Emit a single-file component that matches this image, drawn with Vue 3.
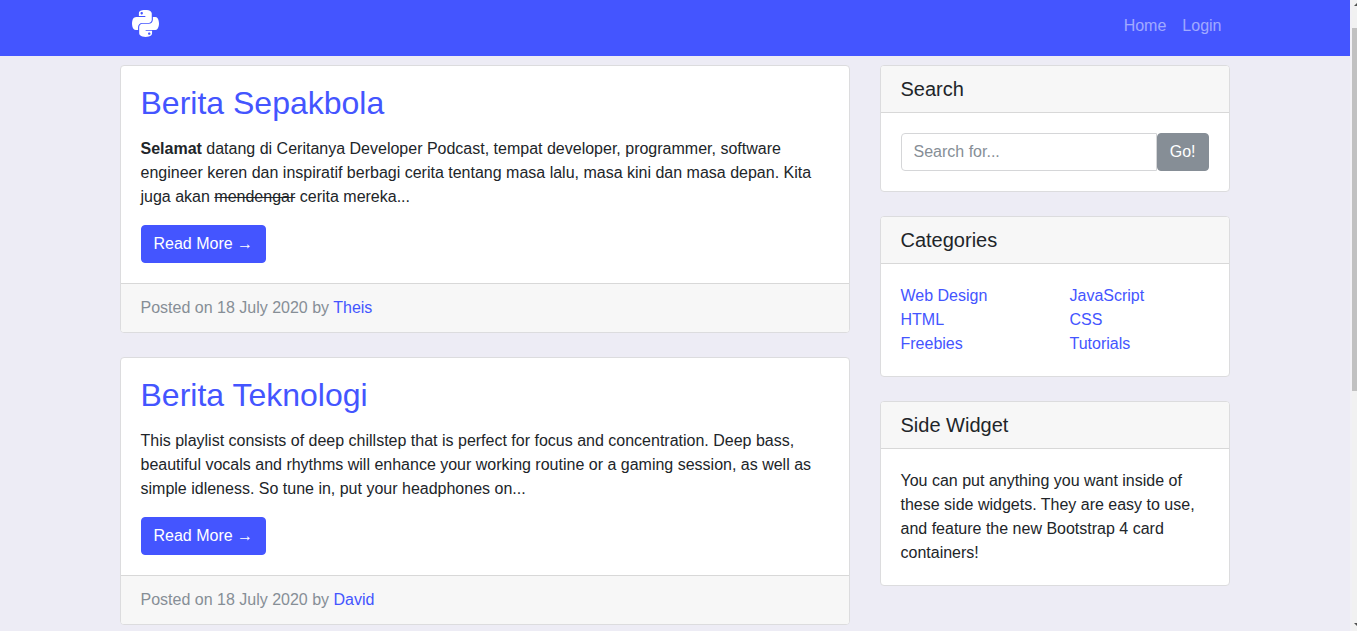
<script setup>
import { ref } from 'vue'

const query = ref('')

const posts = [
  {
    title: 'Berita Sepakbola',
    body: [
      { tag: 'strong', text: 'Selamat' },
      { text: ' datang di Ceritanya Developer Podcast, tempat developer, programmer, software engineer keren dan inspiratif berbagi cerita tentang masa lalu, masa kini dan masa depan. Kita juga akan ' },
      { tag: 's', text: 'mendengar' },
      { text: ' cerita mereka...' }
    ],
    date: '18 July 2020',
    author: 'Theis'
  },
  {
    title: 'Berita Teknologi',
    body: [
      { text: 'This playlist consists of deep chillstep that is perfect for focus and concentration. Deep bass, beautiful vocals and rhythms will enhance your working routine or a gaming session, as well as simple idleness. So tune in, put your headphones on...' }
    ],
    date: '18 July 2020',
    author: 'David'
  }
]

const categories = [
  ['Web Design', 'HTML', 'Freebies'],
  ['JavaScript', 'CSS', 'Tutorials']
]
</script>

<template>
  <div class="shell">
    <div class="page">
      <nav class="navbar">
        <div class="container navbar-inner">
          <a class="brand" href="#" aria-label="Home page">
            <svg class="logo" viewBox="0 0 448 512" aria-hidden="true">
              <path fill="currentColor" d="M439.8 200.5c-7.7-30.9-22.3-54.2-53.4-54.2h-40.1v47.4c0 36.8-31.2 67.8-66.8 67.8H172.7c-29.2 0-53.4 25-53.4 54.3v101.8c0 29 25.2 46 53.4 54.3 33.8 9.9 66.3 11.7 106.8 0 26.9-7.8 53.4-23.5 53.4-54.3v-40.7H226.2v-13.6h160.2c31.1 0 42.6-21.7 53.4-54.2 11.2-33.5 10.7-65.7 0-108.6zM286.2 404c11.1 0 20.1 9.1 20.1 20.3 0 11.3-9 20.4-20.1 20.4-11 0-20.1-9.2-20.1-20.4.1-11.3 9.1-20.3 20.1-20.3zM167.8 248.1h106.8c29.7 0 53.4-24.5 53.4-54.3V91.9c0-29-24.4-50.7-53.4-55.6-35.8-5.9-74.7-5.6-106.8.1-45.2 8-53.4 24.7-53.4 55.6v40.7h106.9v13.6h-147c-31.1 0-58.3 18.7-66.8 54.2-9.8 40.7-10.2 66.1 0 108.6 7.6 31.6 25.7 54.2 56.8 54.2H101v-48.8c0-35.3 30.5-66.4 66.8-66.4zm-6.7-142.6c-11.1 0-20.1-9.1-20.1-20.3.1-11.3 9-20.4 20.1-20.4 11 0 20.1 9.2 20.1 20.4s-9 20.3-20.1 20.3z" />
            </svg>
          </a>
          <div class="nav-links">
            <a href="#">Home</a>
            <a href="#">Login</a>
          </div>
        </div>
      </nav>

      <div class="container columns">
        <main class="stack">
          <article v-for="post in posts" :key="post.title" class="card">
            <div class="card-body">
              <h2><a href="#">{{ post.title }}</a></h2>
              <p class="excerpt"><template v-for="(part, i) in post.body" :key="i"><component :is="part.tag" v-if="part.tag">{{ part.text }}</component><template v-else>{{ part.text }}</template></template></p>
              <a class="btn btn-primary" href="#">Read More →</a>
            </div>
            <footer class="card-footer">Posted on {{ post.date }} by <a href="#">{{ post.author }}</a></footer>
          </article>
        </main>

        <aside class="stack">
          <section class="card">
            <h5>Search</h5>
            <form class="card-body search" @submit.prevent>
              <input v-model="query" type="text" placeholder="Search for..." aria-label="Search for">
              <button class="btn btn-secondary" type="submit">Go!</button>
            </form>
          </section>

          <section class="card">
            <h5>Categories</h5>
            <div class="card-body categories">
              <ul v-for="(group, i) in categories" :key="i">
                <li v-for="name in group" :key="name"><a href="#">{{ name }}</a></li>
              </ul>
            </div>
          </section>

          <section class="card">
            <h5>Side Widget</h5>
            <div class="card-body">You can put anything you want inside of these side widgets. They are easy to use, and feature the new Bootstrap 4 card containers!</div>
          </section>
        </aside>
      </div>
    </div>

    <div class="scrollbar" aria-hidden="true">
      <svg class="arrow" viewBox="0 0 8 4"><path fill="#505050" d="M4 0L8 4H0z" /></svg>
      <div class="thumb"></div>
      <svg class="arrow" viewBox="0 0 8 4"><path fill="#505050" d="M0 0H8L4 4z" /></svg>
    </div>
  </div>
</template>

<style>
body {
  background: #edecf5;
}
</style>

<style scoped>
* {
  box-sizing: border-box;
}

.shell {
  display: grid;
  grid-template-columns: minmax(0, 1fr) 7px;
  min-height: 100vh;
  font-family: "Liberation Sans", Arial, sans-serif;
  font-size: 16px;
  line-height: 24px;
  color: #212529;
}

a {
  color: #4455ff;
  text-decoration: none;
}

.container {
  width: 100%;
  max-width: 1141px;
  margin: 0 auto;
  padding: 0 16px 0 15px;
}

.navbar {
  background: #4455ff;
}

.navbar-inner {
  display: flex;
  align-items: flex-start;
  justify-content: space-between;
  min-height: 56px;
}

.brand {
  display: flex;
  padding: 8px 12px;
  color: #fff;
}

.logo {
  width: 27px;
  height: 31px;
}

.nav-links {
  display: flex;
  padding: 14px 0;
}

.nav-links a {
  padding: 0 8px;
  color: rgba(255, 255, 255, 0.5);
}

.columns {
  display: grid;
  grid-template-columns: minmax(0, 730fr) minmax(0, 350fr);
  gap: 30px;
  align-items: start;
  padding-top: 9px;
}

.stack {
  display: grid;
  gap: 24px;
}

.card {
  background: #fff;
  border: 1px solid #dcdcde;
  border-radius: 4px;
  overflow: hidden;
}

.card-body {
  padding: 20px;
}

h2 {
  margin: 0 0 16px;
  font-size: 32px;
  line-height: 35px;
  font-weight: 400;
}

h5 {
  margin: 0;
  padding: 12px 20px;
  font-size: 20px;
  line-height: 22px;
  font-weight: 400;
  background: #f7f7f7;
  border-bottom: 1px solid #d8d8d8;
}

.excerpt {
  margin: 0 0 16px;
}

.card-footer {
  padding: 12px 20px;
  color: #868e96;
  background: #f7f7f7;
  border-top: 1px solid #d8d8d8;
}

.btn {
  display: block;
  width: fit-content;
  padding: 6px 12px;
  border: 1px solid transparent;
  border-radius: 4px;
  font: inherit;
  color: #fff;
}

.btn-primary {
  background: #4455ff;
  border-color: #4455ff;
}

.btn-secondary {
  background: #868e96;
  border-color: #868e96;
}

.search {
  display: flex;
}

.search input {
  flex: 1;
  min-width: 0;
  height: 38px;
  padding: 6px 12px;
  font: inherit;
  color: #495057;
  background: #fff;
  border: 1px solid #d5d6d8;
  border-radius: 4px 0 0 4px;
}

.search input::placeholder {
  color: #868e96;
  opacity: 1;
}

.categories {
  display: grid;
  grid-template-columns: 1fr 1fr;
  gap: 30px;
}

ul {
  margin: 0;
  padding: 0;
  list-style: none;
}

.scrollbar {
  display: flex;
  flex-direction: column;
  height: 100vh;
  padding: 2px 0 4px;
  overflow: hidden;
  background: #f1f1f1;
  border-left: 2px solid #f1f0f5;
}

.arrow {
  flex: none;
  width: 8px;
  height: 4px;
  margin-left: 2px;
}

.thumb {
  height: 58%;
  margin-top: 22px;
  margin-bottom: auto;
  background: #c1c1c1;
}
</style>
